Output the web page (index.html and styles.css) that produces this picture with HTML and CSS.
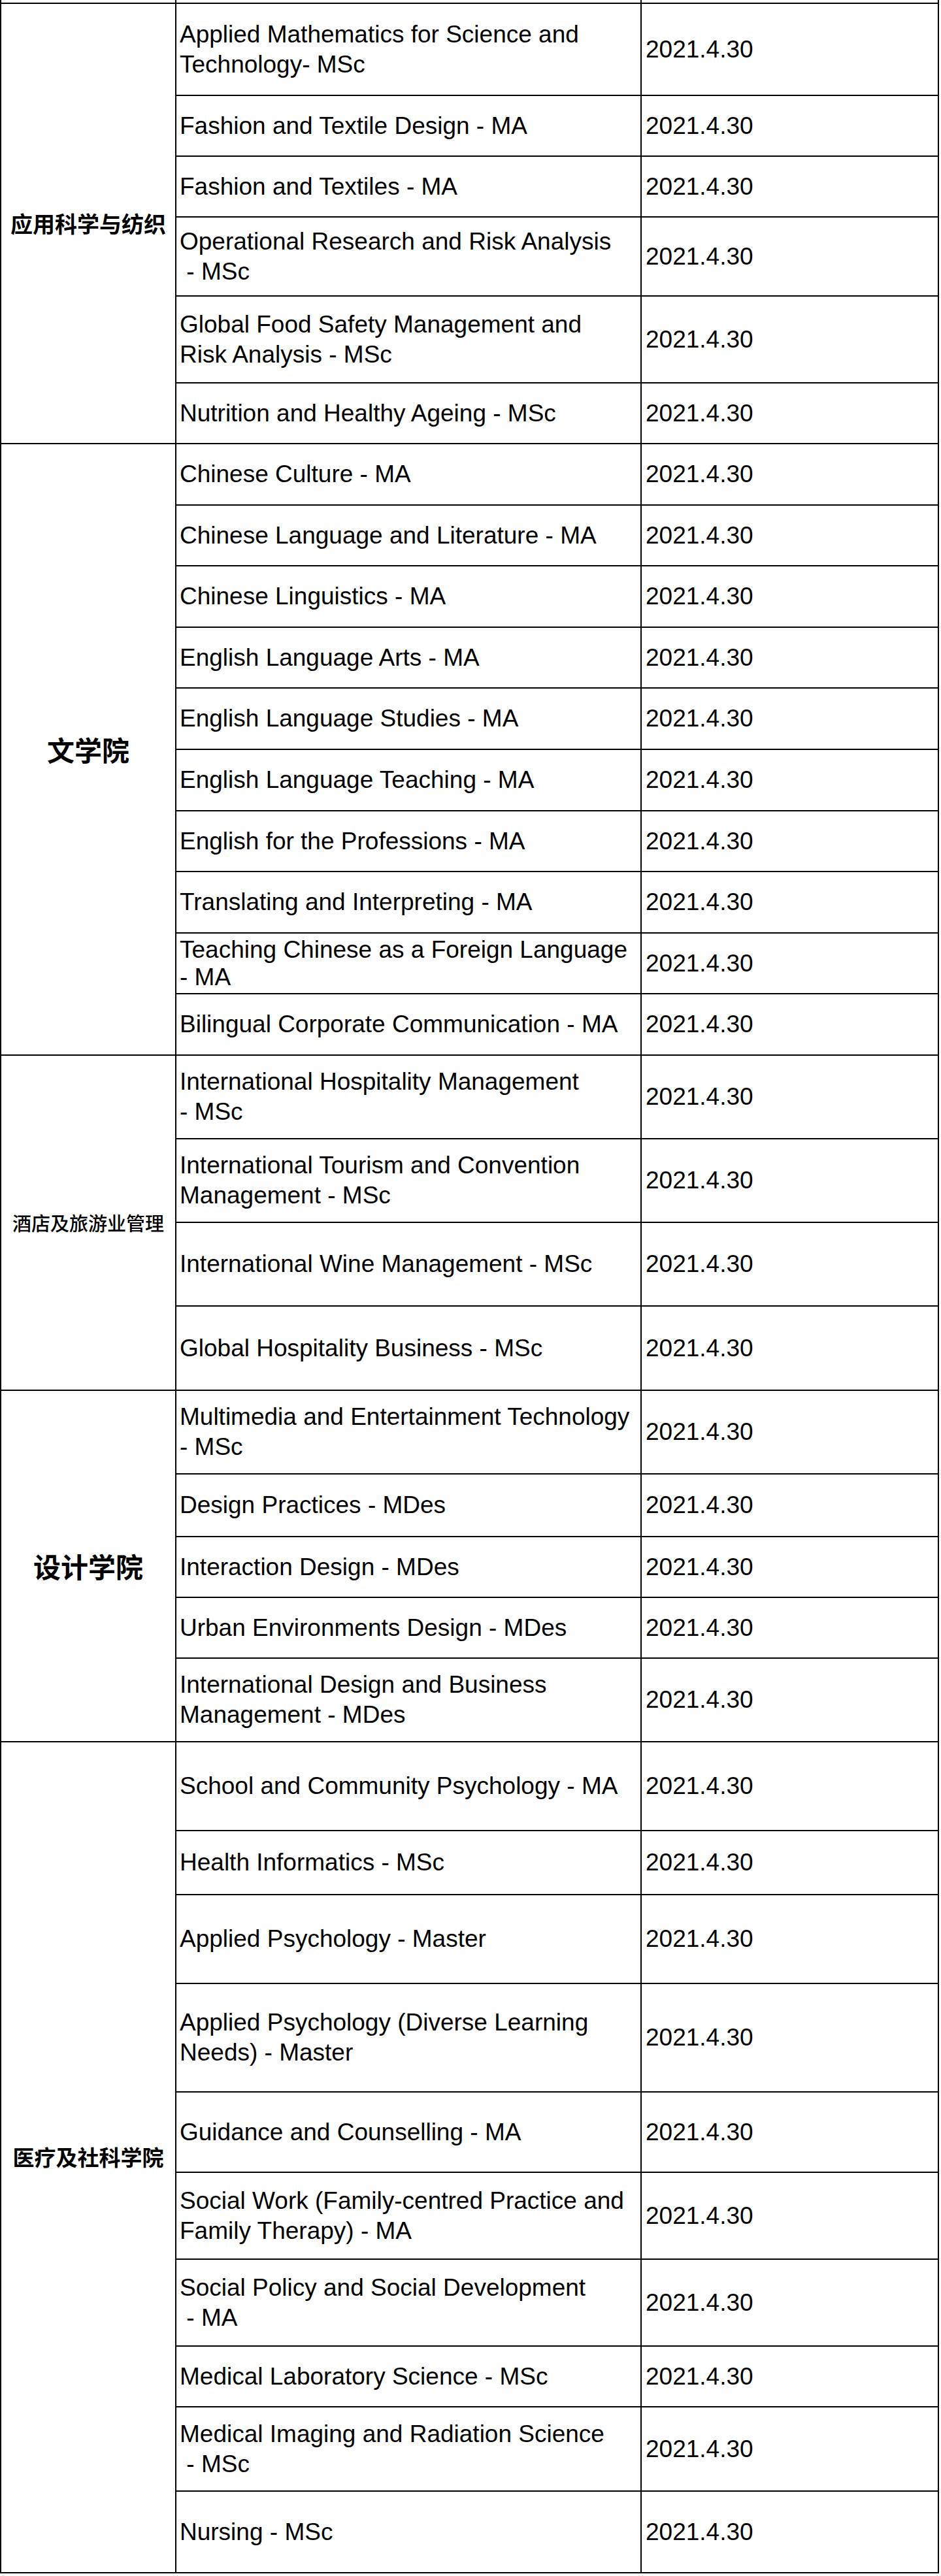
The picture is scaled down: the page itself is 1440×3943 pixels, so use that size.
FILE: index.html
```html
<!DOCTYPE html>
<html lang="zh-CN">
<head>
<meta charset="utf-8">
<title>课程截止日期</title>
<link rel="stylesheet" href="styles.css">
</head>
<body>
<div class="sheet">
  <div class="stub"><div class="s-dept"></div><div class="s-prog"></div><div class="s-date"></div></div>

  <section class="group">
    <div class="dept d39"><span class="label">应用科学与纺织</span></div>
    <div class="rows">
      <div class="row h141"><div class="prog">Applied Mathematics for Science and<br>Technology- MSc</div><div class="date">2021.4.30</div></div>
      <div class="row h93"><div class="prog">Fashion and Textile Design - MA</div><div class="date">2021.4.30</div></div>
      <div class="row h93"><div class="prog">Fashion and Textiles - MA</div><div class="date">2021.4.30</div></div>
      <div class="row h121"><div class="prog">Operational Research and Risk Analysis<br>&nbsp;- MSc</div><div class="date">2021.4.30</div></div>
      <div class="row h133"><div class="prog">Global Food Safety Management and<br>Risk Analysis - MSc</div><div class="date">2021.4.30</div></div>
      <div class="row h93"><div class="prog">Nutrition and Healthy Ageing - MSc</div><div class="date">2021.4.30</div></div>
    </div>
  </section>

  <section class="group">
    <div class="dept d42"><span class="label">文学院</span></div>
    <div class="rows">
      <div class="row h94"><div class="prog">Chinese Culture - MA</div><div class="date">2021.4.30</div></div>
      <div class="row h93"><div class="prog">Chinese Language and Literature - MA</div><div class="date">2021.4.30</div></div>
      <div class="row h94"><div class="prog">Chinese Linguistics - MA</div><div class="date">2021.4.30</div></div>
      <div class="row h93"><div class="prog">English Language Arts - MA</div><div class="date">2021.4.30</div></div>
      <div class="row h94"><div class="prog">English Language Studies - MA</div><div class="date">2021.4.30</div></div>
      <div class="row h94"><div class="prog">English Language Teaching - MA</div><div class="date">2021.4.30</div></div>
      <div class="row h93"><div class="prog">English for the Professions - MA</div><div class="date">2021.4.30</div></div>
      <div class="row h94"><div class="prog">Translating and Interpreting - MA</div><div class="date">2021.4.30</div></div>
      <div class="row h93"><div class="prog tight">Teaching Chinese as a Foreign Language<br>- MA</div><div class="date">2021.4.30</div></div>
      <div class="row h94"><div class="prog">Bilingual Corporate Communication - MA</div><div class="date">2021.4.30</div></div>
    </div>
  </section>

  <section class="group">
    <div class="dept d29"><span class="label">酒店及旅游业管理</span></div>
    <div class="rows">
      <div class="row h128"><div class="prog">International Hospitality Management<br>- MSc</div><div class="date">2021.4.30</div></div>
      <div class="row h128"><div class="prog">International Tourism and Convention<br>Management - MSc</div><div class="date">2021.4.30</div></div>
      <div class="row h128"><div class="prog">International Wine Management - MSc</div><div class="date">2021.4.30</div></div>
      <div class="row h129"><div class="prog">Global Hospitality Business - MSc</div><div class="date">2021.4.30</div></div>
    </div>
  </section>

  <section class="group">
    <div class="dept d42"><span class="label">设计学院</span></div>
    <div class="rows">
      <div class="row h128"><div class="prog">Multimedia and Entertainment Technology<br>- MSc</div><div class="date">2021.4.30</div></div>
      <div class="row h96"><div class="prog">Design Practices - MDes</div><div class="date">2021.4.30</div></div>
      <div class="row h93"><div class="prog">Interaction Design - MDes</div><div class="date">2021.4.30</div></div>
      <div class="row h93"><div class="prog">Urban Environments Design - MDes</div><div class="date">2021.4.30</div></div>
      <div class="row h128"><div class="prog">International Design and Business<br>Management - MDes</div><div class="date">2021.4.30</div></div>
    </div>
  </section>

  <section class="group">
    <div class="dept d33"><span class="label">医疗及社科学院</span></div>
    <div class="rows">
      <div class="row h136"><div class="prog">School and Community Psychology - MA</div><div class="date">2021.4.30</div></div>
      <div class="row h98"><div class="prog">Health Informatics - MSc</div><div class="date">2021.4.30</div></div>
      <div class="row h136"><div class="prog">Applied Psychology - Master</div><div class="date">2021.4.30</div></div>
      <div class="row h166"><div class="prog">Applied Psychology (Diverse Learning<br>Needs) - Master</div><div class="date">2021.4.30</div></div>
      <div class="row h123"><div class="prog">Guidance and Counselling - MA</div><div class="date">2021.4.30</div></div>
      <div class="row h133"><div class="prog">Social Work (Family-centred Practice and<br>Family Therapy) - MA</div><div class="date">2021.4.30</div></div>
      <div class="row h133"><div class="prog">Social Policy and Social Development<br>&nbsp;- MA</div><div class="date">2021.4.30</div></div>
      <div class="row h93"><div class="prog">Medical Laboratory Science - MSc</div><div class="date">2021.4.30</div></div>
      <div class="row h129"><div class="prog">Medical Imaging and Radiation Science<br>&nbsp;- MSc</div><div class="date">2021.4.30</div></div>
      <div class="row h125"><div class="prog">Nursing - MSc</div><div class="date">2021.4.30</div></div>
    </div>
  </section>
</div>
</body>
</html>
```

FILE: styles.css
```css
html, body {
  margin: 0;
  padding: 0;
  background: #ffffff;
}

body {
  font-family: "Liberation Sans", Arial, "Noto Sans CJK SC", sans-serif;
  color: #000000;
}

.sheet {
  width: 1437px;
  border-left: 2px solid #000;
  box-sizing: border-box;
}

.stub {
  display: flex;
  height: 6px;
}

.stub > div {
  box-sizing: border-box;
  border-right: 2px solid #000;
  border-bottom: 2px solid #000;
  height: 6px;
}

.s-dept { width: 268px; }
.s-prog { width: 712px; }
.s-date { width: 455px; }

.group {
  display: flex;
}

.dept {
  width: 268px;
  flex: none;
  box-sizing: border-box;
  border-right: 2px solid #000;
  border-bottom: 2px solid #000;
  display: flex;
  align-items: center;
  justify-content: center;
  font-family: "Noto Sans CJK SC", sans-serif;
  font-weight: 700;
  letter-spacing: 0;
}

.label {
  display: block;
  white-space: nowrap;
  line-height: 1.2;
}

.d39 { font-size: 34px; }
.d42 { font-size: 42px; }
.d29 { font-size: 29px; font-weight: 500; }
.d33 { font-size: 33px; }

.rows {
  display: flex;
  flex-direction: column;
}

.row {
  display: flex;
  box-sizing: border-box;
}

.prog, .date {
  box-sizing: border-box;
  border-right: 2px solid #000;
  border-bottom: 2px solid #000;
  display: flex;
  align-items: center;
  font-size: 37px;
  line-height: 46px;
  white-space: nowrap;
}

.prog {
  width: 712px;
  padding-left: 5px;
}

.prog.tight {
  line-height: 42px;
}

.date {
  width: 455px;
  padding-left: 6px;
}

.h93 { height: 93px; }
.h94 { height: 94px; }
.h96 { height: 96px; }
.h98 { height: 98px; }
.h121 { height: 121px; }
.h123 { height: 123px; }
.h125 { height: 125px; }
.h128 { height: 128px; }
.h129 { height: 129px; }
.h133 { height: 133px; }
.h136 { height: 136px; }
.h141 { height: 141px; }
.h166 { height: 166px; }
```
